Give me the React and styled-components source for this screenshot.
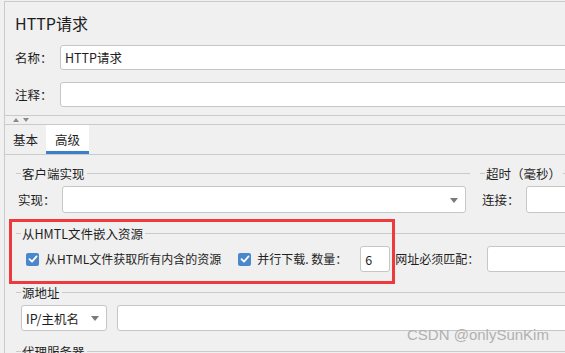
import React from 'react'
import styled, { createGlobalStyle } from 'styled-components'

const GlobalStyle = createGlobalStyle`
  html, body {
    margin: 0;
    padding: 0;
    background: #f0f0f0;
    overflow: hidden;
  }
  body {
    font-family: "Noto Sans CJK SC", "Liberation Sans", sans-serif;
    color: #1e1e1e;
  }
`

const Page = styled.div`
  width: 620px;
  height: 353px;
  padding: 1px 0 0 4px;
  box-sizing: border-box;
  position: relative;
`

const Panel = styled.div`
  border-top: 1px solid #cacaca;
  border-left: 1px solid #cacaca;
  height: 100%;
  box-sizing: border-box;
`

const Header = styled.div`
  padding: 11px 0 8px 10px;
  display: flex;
  flex-direction: column;
  gap: 12px;
`

const Title = styled.div`
  font-size: 16px;
  line-height: 20px;
  height: 20px;
`

const Row = styled.div`
  display: flex;
  align-items: center;
  padding-left: ${p => p.$pad || 0}px;
  padding-right: ${p => p.$padR || 0}px;
  gap: ${p => p.$gap || 0}px;
`

const Label = styled.span`
  font-size: ${p => p.$fs || 12.5}px;
  line-height: 16px;
  width: ${p => (p.$w ? `${p.$w}px` : 'auto')};
  flex: none;
  white-space: nowrap;
  margin-left: ${p => p.$ml || 0}px;
  margin-right: ${p => p.$mr || 0}px;
`

const Input = styled.div`
  height: ${p => p.$h || 25}px;
  box-sizing: border-box;
  background: #fff;
  border: 1px solid #c6c6c6;
  border-radius: 3px;
  flex: ${p => (p.$w ? 'none' : 1)};
  width: ${p => (p.$w ? `${p.$w}px` : 'auto')};
  display: flex;
  align-items: center;
  padding: 0 8px 0 4px;
  font-size: 12.5px;
  position: relative;
`

const Splitter = styled.div`
  border-top: 1px solid #cacaca;
  border-bottom: 1px solid #cacaca;
  height: 8px;
  display: flex;
  align-items: center;
  gap: 4px;
  padding-left: 8px;
`

const Tabs = styled.div`
  display: flex;
  border-bottom: 1px solid #cacaca;
  height: 29px;
`

const Tab = styled.div`
  font-size: 12.5px;
  padding: 2px ${p => (p.$active ? 9 : 8)}px 0;
  display: flex;
  align-items: center;
  box-sizing: border-box;
  background: ${p => (p.$active ? '#fff' : 'transparent')};
  border-bottom: 3px solid ${p => (p.$active ? '#3c7fcc' : 'transparent')};
`

const Content = styled.div`
  padding: 10px 0 0 11px;
  display: flex;
  flex-direction: column;
  gap: 12px;
`

const GroupRow = styled.div`
  display: flex;
  gap: 10px;
`

const Group = styled.div`
  flex: ${p => (p.$w ? 'none' : 1)};
  width: ${p => (p.$w ? `${p.$w}px` : 'auto')};
  display: flex;
  flex-direction: column;
  gap: 5px;
  position: relative;
`

const GroupTitle = styled.div`
  display: flex;
  align-items: center;
  height: 16px;
  font-size: 12.5px;
  white-space: nowrap;
  &::before {
    content: '';
    width: 5px;
    border-top: 1px solid #cacaca;
    margin-right: 1px;
  }
  &::after {
    content: '';
    flex: 1;
    border-top: 1px solid #cacaca;
    margin-left: 2px;
  }
`

const Annotation = styled.div`
  position: absolute;
  left: -7px;
  top: -6px;
  width: 386px;
  height: 65px;
  box-sizing: border-box;
  border: 3px solid #ee3a3c;
  pointer-events: none;
`

const Check = styled.span`
  width: 13px;
  height: 13px;
  border-radius: 2px;
  background: #4a87cd;
  display: inline-flex;
  align-items: center;
  justify-content: center;
  flex: none;
  margin-right: 6px;
`

const Caret = styled.span`
  position: absolute;
  right: ${p => p.$r || 8}px;
  top: 50%;
  margin-top: -2px;
  width: 0;
  height: 0;
  border-left: 4px solid transparent;
  border-right: 4px solid transparent;
  border-top: 5px solid #7a7a7a;
`

const Tri = styled.span`
  width: 0;
  height: 0;
  border-left: 3.5px solid transparent;
  border-right: 3.5px solid transparent;
  ${p => (p.$up ? 'border-bottom: 4px solid #8a8a8a;' : 'border-top: 4px solid #8a8a8a;')}
`

const Watermark = styled.div`
  position: absolute;
  left: 407px;
  top: 326px;
  font-family: "Liberation Sans", Arial, sans-serif;
  font-size: 15px;
  line-height: 18px;
  color: #b0b0b0;
  white-space: nowrap;
`

const CheckBox = () => (
  <Check>
    <svg width="10" height="10" viewBox="0 0 10 10">
      <path d="M1.5 5.2 L4 7.6 L8.6 2.4" fill="none" stroke="#fff" strokeWidth="1.8" strokeLinecap="round" strokeLinejoin="round" />
    </svg>
  </Check>
)

export default function App() {
  return (
    <>
      <GlobalStyle />
      <Page>
        <Panel>
          <Header>
            <Title>HTTP请求</Title>
            <Row>
              <Label $w={45}>名称：</Label>
              <Input>HTTP请求</Input>
            </Row>
            <Row>
              <Label $w={45}>注释：</Label>
              <Input />
            </Row>
          </Header>
          <Splitter>
            <Tri $up />
            <Tri />
          </Splitter>
          <Tabs>
            <Tab>基本</Tab>
            <Tab $active>高级</Tab>
          </Tabs>
          <Content>
            <GroupRow>
              <Group>
                <GroupTitle>客户端实现</GroupTitle>
                <Row $pad={2} $padR={4}>
                  <Label $w={44}>实现：</Label>
                  <Input $h={27}>
                    <Caret $r={7} />
                  </Input>
                </Row>
              </Group>
              <Group $w={140}>
                <GroupTitle>超时（毫秒）</GroupTitle>
                <Row $pad={2}>
                  <Label $w={44}>连接：</Label>
                  <Input $h={27} />
                </Row>
              </Group>
            </GroupRow>
            <Group>
              <GroupTitle>从HMTL文件嵌入资源</GroupTitle>
              <Row $pad={10}>
                <CheckBox />
                <Label $fs={12} $mr={17}>从HTML文件获取所有内含的资源</Label>
                <CheckBox />
                <Label $fs={12} $mr={13}>并行下载. 数量：</Label>
                <Input $w={30} $h={26}>6</Input>
                <Label $fs={12} $ml={5} $mr={8}>网址必须匹配：</Label>
                <Input $h={26} />
              </Row>
              <Annotation />
            </Group>
            <Group>
              <GroupTitle>源地址</GroupTitle>
              <Row $pad={5} $gap={10}>
                <Input $w={86} $h={26}>
                  IP/主机名
                  <Caret $r={7} />
                </Input>
                <Input $h={26} />
              </Row>
            </Group>
            <Group>
              <GroupTitle>代理服务器</GroupTitle>
            </Group>
          </Content>
        </Panel>
        <Watermark>CSDN @onlySunKim</Watermark>
      </Page>
    </>
  )
}
